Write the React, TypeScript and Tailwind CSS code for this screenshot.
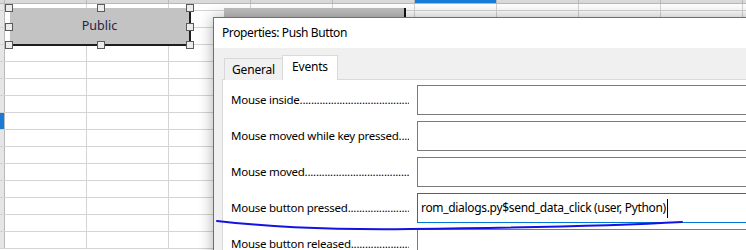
import React from "react";

const ROWS = 14;
const COLS = 9;
const SELECTED_ROW = 6;
const SELECTED_COL = 5;

const ui = { fontFamily: '"Noto Sans", "Open Sans", sans-serif' };

const events = [
  { label: "Mouse inside", value: "" },
  { label: "Mouse moved while key pressed", value: "" },
  { label: "Mouse moved", value: "" },
  { label: "Mouse button pressed", value: "rom_dialogs.py$send_data_click (user, Python)", focused: true },
  { label: "Mouse button released", value: "" },
];

function Sheet() {
  return (
    <div className="flex flex-col">
      {/* column header bottom edge */}
      <div className="flex h-[4px] border-b border-[#b9b9b9] bg-[#dadada]">
        <div className="w-[5px] shrink-0 border-r border-[#b9b9b9]" />
        {Array.from({ length: COLS }).map((_, c) => (
          <div
            key={c}
            className={
              c === SELECTED_COL
                ? "w-[82px] shrink-0 border-r border-[#b9b9b9] bg-[#1a7bd6]"
                : "w-[82px] shrink-0 border-r border-[#b9b9b9]"
            }
          />
        ))}
      </div>
      <div className="flex h-[7px] border-b border-[#d4d4d4]">
        <div className="w-[5px] shrink-0 border-r border-[#b9b9b9] bg-[#e6e6e6]" />
        {Array.from({ length: COLS }).map((_, c) => (
          <div key={c} className="w-[82px] shrink-0 border-r border-[#d4d4d4]" />
        ))}
      </div>
      {Array.from({ length: ROWS }).map((_, r) => (
        <div key={r} className="flex h-[17px] border-b border-[#d4d4d4]">
          <div
            className={
              r === SELECTED_ROW
                ? "w-[5px] shrink-0 border-r border-[#b9b9b9] bg-[#1a7bd6]"
                : "w-[5px] shrink-0 border-r border-[#b9b9b9] bg-[#e6e6e6]"
            }
          />
          {Array.from({ length: COLS }).map((_, c) => (
            <div key={c} className="w-[82px] shrink-0 border-r border-[#d4d4d4]" />
          ))}
        </div>
      ))}
    </div>
  );
}

function Handle({ x, y }: { x: number; y: number }) {
  return (
    <div
      className="absolute h-[8px] w-[8px] border border-[#5a5a5a] bg-[#ececec]"
      style={{ left: x - 4, top: y - 4 }}
    />
  );
}

function PublicButton() {
  return (
    <>
      <div
        className="absolute left-[10px] top-[8px] flex h-[38px] w-[181px] items-center justify-center border-b-2 border-r-2 border-[#1e1e1e] bg-[#c3c3c3] text-[12.5px] text-[#22224a]"
        style={ui}
      >
        Public
      </div>
      {[9, 101, 190].map((x) =>
        [8, 27, 45].map((y) =>
          x === 101 && y === 27 ? null : <Handle key={`${x}-${y}`} x={x} y={y} />
        )
      )}
    </>
  );
}

function EventRow({ label, value, focused }: { label: string; value: string; focused?: boolean }) {
  return (
    <div className="flex h-[30px] items-center">
      <div className="mr-[8px] flex w-[178px] shrink-0 whitespace-nowrap text-[11.5px] tracking-[-0.25px] text-black">
        <span>{label}</span>
        <span className="min-w-0 flex-1 overflow-hidden">
          {"...................................................."}
        </span>
      </div>
      <div
        className={
          focused
            ? "flex h-[30px] w-[360px] shrink-0 items-center border border-[#0078d7] bg-white pl-[3px] text-[12px] tracking-[-0.32px] text-black"
            : "h-[30px] w-[360px] shrink-0 border border-[#7a7a7a] bg-white"
        }
      >
        <span>{value}</span>
        {focused && <span className="ml-[1px] h-[19px] w-px shrink-0 bg-black" />}
      </div>
    </div>
  );
}

function Dialog() {
  return (
    <div
      className="absolute left-[213px] top-[17px] w-[560px] border-l border-t border-[#6f6f6f] bg-[#f0f0f0] shadow-[0_0_14px_rgba(0,0,0,0.32)]"
      style={ui}
    >
      <div className="flex h-[30px] items-center bg-white pl-[8px] text-[12px] tracking-[-0.4px] text-black">
        Properties: Push Button
      </div>
      <div className="pl-[8px] pt-[8px]">
        <div className="ml-[2px] flex h-[24px] items-end text-[12px] tracking-[-0.2px] text-black">
          <div className="flex h-[22px] w-[58px] items-center justify-center border-l border-t border-[#d9d9d9] bg-[#f0f0f0] pt-[1px]">
            General
          </div>
          <div className="relative z-10 flex h-[25px] w-[56px] items-center justify-center border-l border-r border-t border-[#d9d9d9] bg-white pb-[3px]">
            Events
          </div>
        </div>
        <div className="-mt-px flex h-[200px] flex-col gap-[6px] border-l border-t border-[#d9d9d9] bg-white pl-[8px] pt-[5px]">
          {events.map((e) => (
            <EventRow key={e.label} {...e} />
          ))}
        </div>
      </div>
    </div>
  );
}

export default function App() {
  return (
    <div className="relative h-[250px] w-[746px] overflow-hidden bg-white">
      <Sheet />
      <PublicButton />
      <div className="absolute left-[224px] top-[8px] h-[38px] w-[182px] border-r-2 border-[#111] bg-[#c0c0c0]" />
      <Dialog />
      <svg className="absolute left-0 top-0" width="746" height="250" viewBox="0 0 746 250">
        <path
          d="M217 221 C 270 227, 330 230, 410 229 C 500 228, 610 226, 682 222"
          fill="none"
          stroke="#1414e0"
          strokeWidth="2"
          strokeLinecap="round"
        />
      </svg>
    </div>
  );
}
